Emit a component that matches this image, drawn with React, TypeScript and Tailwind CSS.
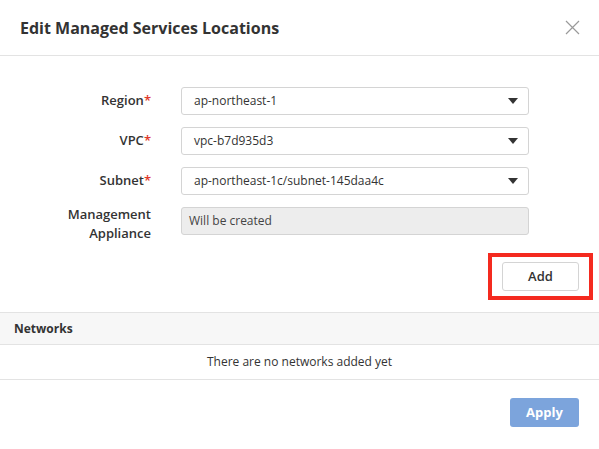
import React from "react";

const fields = [
  { label: "Region", value: "ap-northeast-1", required: true },
  { label: "VPC", value: "vpc-b7d935d3", required: true },
  { label: "Subnet", value: "ap-northeast-1c/subnet-145daa4c", required: true },
];

const Caret: React.FC = () => (
  <svg width="10" height="6" viewBox="0 0 10 6" className="shrink-0">
    <path d="M0 0h10L5 6z" fill="#333" />
  </svg>
);

const App: React.FC = () => {
  return (
    <div
      className="w-[599px] h-[449px] bg-white text-[#333] overflow-hidden flex flex-col"
      style={{ fontFamily: '"Open Sans", "Liberation Sans", sans-serif' }}
    >
      {/* header */}
      <div className="h-[56px] shrink-0 border-b border-[#e3e3e3] flex items-center justify-between pl-[20px] pr-[19px]">
        <h1 className="text-[16px] font-bold text-[#333]">
          Edit Managed Services Locations
        </h1>
        <button className="w-[15px] h-[15px] flex items-center justify-center -mt-[1px]">
          <svg width="15" height="15" viewBox="0 0 15 15">
            <path d="M1 1l13 13M14 1L1 14" stroke="#9a9a9a" strokeWidth="1.2" />
          </svg>
        </button>
      </div>

      {/* form */}
      <div className="flex flex-col pt-[31px]">
        {fields.map((f) => (
          <div key={f.label} className="flex items-center mb-[12px]">
            <label className="w-[151px] text-right text-[13px] font-semibold text-[#333]">
              {f.label}
              {f.required && <span className="text-[#e0392b]">*</span>}
            </label>
            <div className="ml-[30px] w-[348px] h-[28px] border border-[#d4d4d4] rounded-[3px] bg-white flex items-center justify-between pl-[12px] pr-[10px]">
              <span className="text-[12px] text-[#333]">{f.value}</span>
              <Caret />
            </div>
          </div>
        ))}
        <div className="flex items-start -mt-[2px]">
          <label className="w-[151px] text-right text-[13px] font-semibold leading-[19px] text-[#333]">
            Management
            <br />
            Appliance
          </label>
          <div className="ml-[30px] mt-[2px] w-[348px] h-[28px] border border-[#d4d4d4] rounded-[3px] bg-[#ededed] flex items-center pl-[7px]">
            <span className="text-[12px] text-[#444]">Will be created</span>
          </div>
        </div>
      </div>

      {/* add */}
      <div className="flex justify-end pr-[6px] mt-[10px]">
        <div className="border-4 border-[#f42a1f] px-[10px] py-[5px]">
          <button className="w-[77px] h-[29px] border border-[#d4d4d4] rounded-[3px] bg-white text-[13px] font-semibold text-[#333]">
            Add
          </button>
        </div>
      </div>

      {/* networks */}
      <div className="mt-[12px] h-[33px] bg-[#f7f7f7] border-y border-[#e3e3e3] flex items-center px-[14px]">
        <span className="text-[12px] font-bold text-[#333]">Networks</span>
      </div>
      <div className="h-[35px] border-b border-[#e3e3e3] flex items-center justify-center">
        <span className="text-[12px] text-[#333]">There are no networks added yet</span>
      </div>

      {/* footer */}
      <div className="flex justify-end pr-[20px] mt-[18px]">
        <button className="w-[69px] h-[29px] rounded-[3px] bg-[#7ca4dc] text-white text-[13px] font-bold">
          Apply
        </button>
      </div>
    </div>
  );
};

export default App;
